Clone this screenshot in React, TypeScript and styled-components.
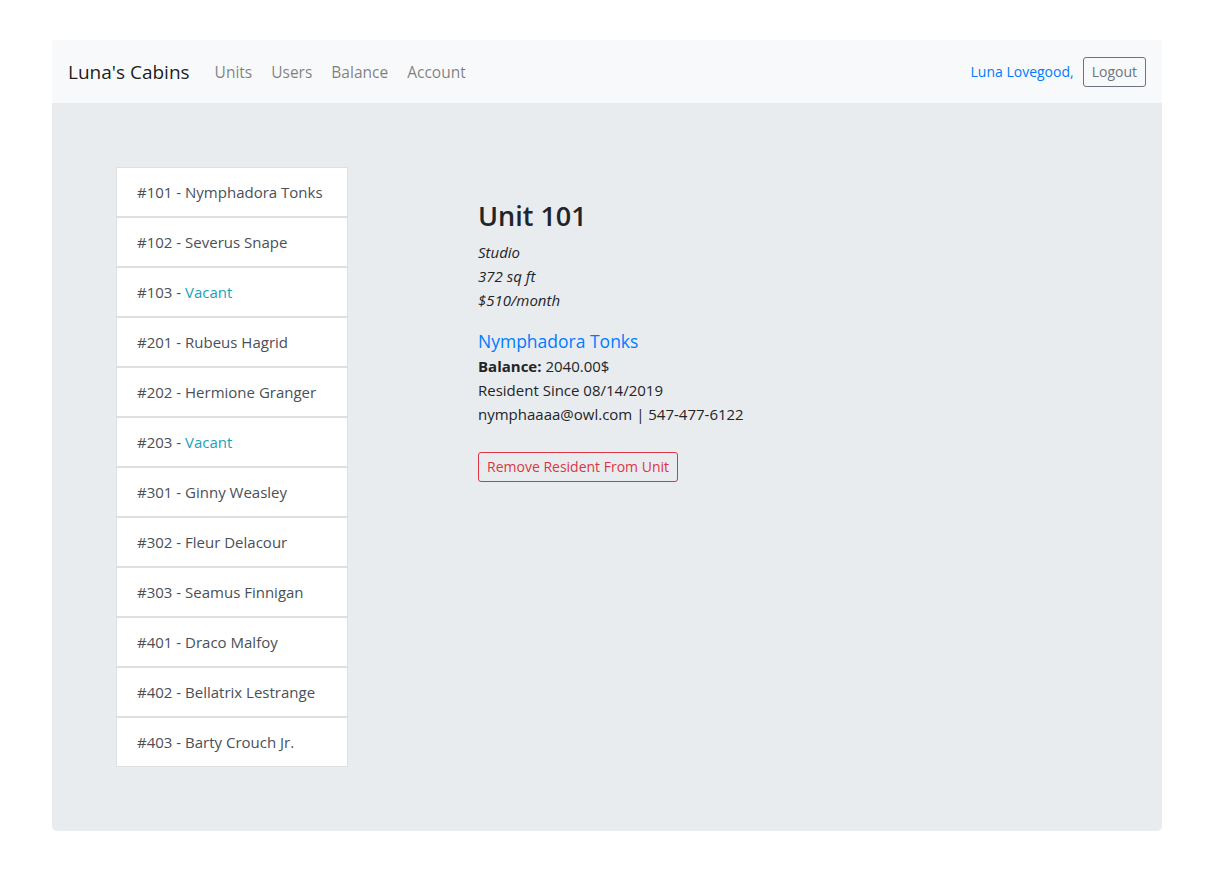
import React from 'react'
import styled, { createGlobalStyle } from 'styled-components'

const GlobalStyle = createGlobalStyle`
  body {
    margin: 0;
    background: #fff;
    font-family: "Open Sans", "Noto Sans", sans-serif;
    font-size: 15px;
    line-height: 24px;
    color: #212529;
  }
  * { box-sizing: border-box; }
`

const Page = styled.div`
  width: 1110px;
  margin: 40px 0 0 52px;
`

const Navbar = styled.nav`
  display: flex;
  align-items: center;
  height: 63px;
  padding: 0 16px;
  background: #f8f9fa;
`

const Brand = styled.a`
  font-size: 19px;
  color: rgba(0, 0, 0, 0.9);
  margin-right: 16px;
  line-height: 30px;
`

const NavLinks = styled.div`
  display: flex;
  flex: 1;
  margin-left: 1px;
`

const NavLink = styled.a`
  padding: 8px;
  margin-right: 3px;
  color: rgba(0, 0, 0, 0.5);
  font-size: 15.5px;
`

const UserName = styled.a`
  color: #007bff;
  font-size: 14px;
  margin-right: 9px;
`

const OutlineButton = styled.button<{ $tone: string }>`
  font-family: inherit;
  font-size: 14px;
  line-height: 20px;
  padding: 4px 8px;
  border-radius: 3px;
  background: transparent;
  color: ${({ $tone }) => $tone};
  border: 1px solid ${({ $tone }) => $tone};
`

const Jumbotron = styled.main`
  display: flex;
  background: #e9ecef;
  border-radius: 0 0 5px 5px;
  padding: 64px;
  margin-bottom: 48px;
`

const UnitList = styled.ul`
  list-style: none;
  margin: 0;
  padding: 0;
  width: 232px;
  flex-shrink: 0;
`

const UnitItem = styled.li`
  height: 50px;
  display: flex;
  align-items: center;
  padding: 0 20px;
  white-space: nowrap;
  background: #fff;
  color: #495057;
  border: 1px solid rgba(0, 0, 0, 0.125);
`

const Vacant = styled.span`
  color: #17a2b8;
`

const Details = styled.section`
  margin-left: 130px;
  padding-top: 33px;
`

const UnitTitle = styled.h3`
  margin: 0 0 8px;
  font-size: 27px;
  font-weight: 600;
  line-height: 1.2;
`

const Facts = styled.p`
  margin: 0 0 16px;
  font-style: italic;
`

const ResidentName = styled.a`
  display: block;
  color: #007bff;
  font-size: 17.5px;
  line-height: 26px;
`

const Line = styled.div``

const Actions = styled.div`
  margin-top: 26px;
`

const units = [
  { id: '101', name: 'Nymphadora Tonks' },
  { id: '102', name: 'Severus Snape' },
  { id: '103', name: null },
  { id: '201', name: 'Rubeus Hagrid' },
  { id: '202', name: 'Hermione Granger' },
  { id: '203', name: null },
  { id: '301', name: 'Ginny Weasley' },
  { id: '302', name: 'Fleur Delacour' },
  { id: '303', name: 'Seamus Finnigan' },
  { id: '401', name: 'Draco Malfoy' },
  { id: '402', name: 'Bellatrix Lestrange' },
  { id: '403', name: 'Barty Crouch Jr.' },
]

const App = () => {
  return (
    <Page>
      <GlobalStyle />
      <Navbar>
        <Brand>Luna's Cabins</Brand>
        <NavLinks>
          <NavLink>Units</NavLink>
          <NavLink>Users</NavLink>
          <NavLink>Balance</NavLink>
          <NavLink>Account</NavLink>
        </NavLinks>
        <UserName>Luna Lovegood,</UserName>
        <OutlineButton $tone="#6c757d">Logout</OutlineButton>
      </Navbar>

      <Jumbotron>
        <UnitList>
          {units.map((u) => (
            <UnitItem key={u.id}>
              #{u.id} -&nbsp;{u.name ? u.name : <Vacant>Vacant</Vacant>}
            </UnitItem>
          ))}
        </UnitList>

        <Details>
          <UnitTitle>Unit 101</UnitTitle>
          <Facts>
            Studio
            <br />
            372 sq ft
            <br />
            $510/month
          </Facts>
          <ResidentName>Nymphadora Tonks</ResidentName>
          <Line>
            <b>Balance:</b> 2040.00$
          </Line>
          <Line>Resident Since 08/14/2019</Line>
          <Line>nymphaaaa@owl.com | 547-477-6122</Line>
          <Actions>
            <OutlineButton $tone="#dc3545">Remove Resident From Unit</OutlineButton>
          </Actions>
        </Details>
      </Jumbotron>
    </Page>
  )
}

export default App
